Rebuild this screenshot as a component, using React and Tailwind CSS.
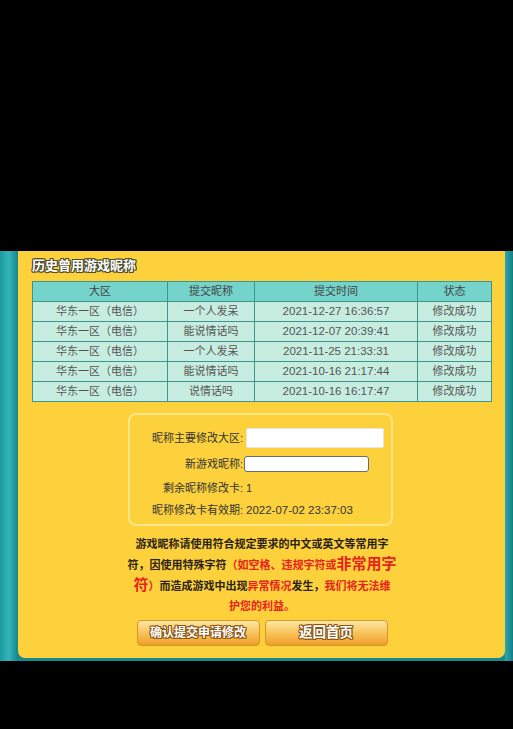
import React from "react";

const rows = [
  ["华东一区（电信）", "一个人发呆", "2021-12-27 16:36:57", "修改成功"],
  ["华东一区（电信）", "能说情话吗", "2021-12-07 20:39:41", "修改成功"],
  ["华东一区（电信）", "一个人发呆", "2021-11-25 21:33:31", "修改成功"],
  ["华东一区（电信）", "能说情话吗", "2021-10-16 21:17:44", "修改成功"],
  ["华东一区（电信）", "说情话吗", "2021-10-16 16:17:47", "修改成功"],
];

const font = "font-['Liberation_Sans','Noto_Sans_CJK_SC',sans-serif]";

function GameButton({ size, children }) {
  return (
    <button
      type="button"
      className={`flex h-[26px] w-[123px] items-center justify-center rounded-[4px] border border-[#d8952a] bg-linear-to-b from-[#fde7a0] via-[#f8c35a] to-[#ef9e22] font-bold text-white [text-shadow:1px_0_0_#8a5516,-1px_0_0_#8a5516,0_1px_0_#8a5516,0_-1px_0_#8a5516,1px_1px_0_#8a5516,-1px_-1px_0_#8a5516,1px_-1px_0_#8a5516,-1px_1px_0_#8a5516] ${size}`}
    >
      {children}
    </button>
  );
}

export default function App() {
  return (
    <div className={`flex h-[729px] w-[513px] flex-col bg-black ${font}`}>
      <div className="h-[251px] shrink-0" />

      <div className="flex h-[410px] shrink-0 bg-[#168a8f]">
        <div className="w-[18px] bg-linear-to-r from-[#1b9aa0] via-[#34b4b8] to-[#12858b]" />

        <div className="mb-[3px] flex flex-1 flex-col rounded-b-[7px] bg-[#fcd13c] pl-[14px]">
          <h2 className="mt-[6px] h-[18px] text-[13px] font-bold leading-[18px] text-white [text-shadow:1px_0_0_#4b4a2c,-1px_0_0_#4b4a2c,0_1px_0_#4b4a2c,0_-1px_0_#4b4a2c,1px_1px_0_#4b4a2c,-1px_-1px_0_#4b4a2c,1px_-1px_0_#4b4a2c,-1px_1px_0_#4b4a2c]">
            历史曾用游戏昵称
          </h2>

          <table className="mt-[6px] w-[460px] border-collapse border border-[#3e948e] text-center text-[11px]">
            <thead>
              <tr className="h-[20px] bg-[#74d3cb] text-[#444]">
                <th className="w-[135px] border border-[#3e948e] font-normal">大区</th>
                <th className="w-[87px] border border-[#3e948e] font-normal">提交昵称</th>
                <th className="w-[163px] border border-[#3e948e] font-normal">提交时间</th>
                <th className="border border-[#3e948e] font-normal">状态</th>
              </tr>
            </thead>
            <tbody>
              {rows.map((r, i) => (
                <tr key={i} className="h-[20px] bg-[#c7ede0] text-[#555]">
                  <td className="border border-[#3e948e]">{r[0]}</td>
                  <td className="border border-[#3e948e]">{r[1]}</td>
                  <td className="border border-[#3e948e] text-[11.5px]">{r[2]}</td>
                  <td className="border border-[#3e948e]">{r[3]}</td>
                </tr>
              ))}
            </tbody>
          </table>

          <div className="ml-[96px] mt-[11px] h-[113px] w-[265px] rounded-[8px] border-2 border-[#fde58c] text-[11px] text-[#333]">
            <div className="mt-[13px] grid grid-cols-[113px_auto] items-center gap-x-[3px]">
              <span className="text-right">昵称主要修改大区:</span>
              <input className="h-[20px] w-[138px] rounded-[2px] border border-[#e6e6e6] bg-white" />
            </div>
            <div className="mt-[8px] grid grid-cols-[113px_auto] items-center gap-x-[1px]">
              <span className="text-right">新游戏昵称:</span>
              <input className="h-[16px] w-[125px] rounded-[3px] border border-[#6b6b6b] bg-white" />
            </div>
            <div className="mt-[7px] grid h-[16px] grid-cols-[113px_auto] items-center leading-[16px]">
              <span className="text-right">剩余昵称修改卡:</span>
              <span className="pl-[3px]">1</span>
            </div>
            <div className="mt-[6px] grid h-[16px] grid-cols-[113px_auto] items-center leading-[16px]">
              <span className="text-right">昵称修改卡有效期:</span>
              <span className="whitespace-nowrap pl-[3px] text-[11.5px]">2022-07-02 23:37:03</span>
            </div>
          </div>

          <div className="mt-[8px] w-[460px] text-center text-[11px] font-bold leading-[20px] text-[#2b2216]">
            <div className="whitespace-nowrap">游戏昵称请使用符合规定要求的中文或英文等常用字</div>
            <div className="whitespace-nowrap">
              符，因使用特殊字符<span className="text-[#e8231c]">（如空格、违规字符或<span className="text-[15px]">非常用字</span></span>
            </div>
            <div className="whitespace-nowrap">
              <span className="text-[#e8231c]"><span className="text-[15px]">符</span>）</span>而造成游戏中出现<span className="text-[#e8231c]">异常情况</span>发生，<span className="text-[#e8231c]">我们将无法维</span>
            </div>
            <div className="whitespace-nowrap text-[#e8231c]">护您的利益。</div>
          </div>

          <div className="mt-[4px] flex w-[460px] justify-center gap-[5px]">
            <GameButton size="text-[12px]">确认提交申请修改</GameButton>
            <GameButton size="text-[13.5px]">返回首页</GameButton>
          </div>
        </div>

        <div className="w-[8px] bg-linear-to-r from-[#2aa9ad] to-[#147f85]" />
      </div>

      <div className="flex-1" />
    </div>
  );
}
